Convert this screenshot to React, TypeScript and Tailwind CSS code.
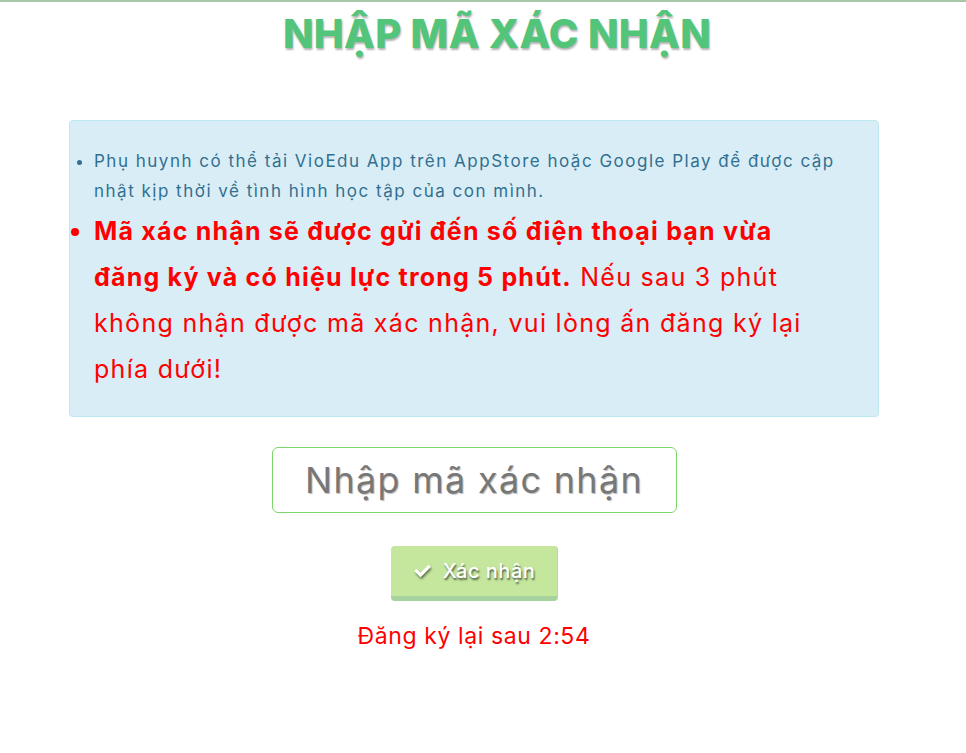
import React from "react";

export default function App() {
  return (
    <div
      className="min-h-[753px] w-full bg-white border-t-2 border-[#a8c6a8]"
      style={{ fontFamily: 'Inter, "Noto Sans", sans-serif' }}
    >
      <div className="ml-[69px] w-[810px] flex flex-col items-center">
        <h1 className="pl-[46px] mt-[6px] text-[40px] leading-[52px] font-extrabold text-[#52c57a] tracking-[0.3px] [text-shadow:1px_2px_2px_rgba(0,0,0,0.3)]">
          NHẬP MÃ XÁC NHẬN
        </h1>

        <div className="mt-[60px] w-full rounded-[4px] border border-[#bce8f1] bg-[#d9edf7] pt-[25px] pb-[24px]">
          <ul className="list-disc pl-[24px] pr-[35px]">
            <li className="text-[17px] leading-[30px] tracking-[1.5px] text-[#31708f]">
              Phụ huynh có thể tải VioEdu App trên AppStore hoặc Google Play để được cập nhật kịp thời về tình hình học tập của con mình.
            </li>
            <li className="mt-[2px] text-[25px] leading-[46px] tracking-[1.3px] text-[#ff0000] marker:text-[#ff0000]">
              <b className="font-bold tracking-[1.2px]">
                Mã xác nhận sẽ được gửi đến số điện thoại bạn vừa đăng ký và có hiệu lực trong 5 phút.
              </b>{" "}
              Nếu sau 3 phút không nhận được mã xác nhận, vui lòng ấn đăng ký lại phía dưới!
            </li>
          </ul>
        </div>

        <input
          type="text"
          placeholder="Nhập mã xác nhận"
          className="mt-[30px] h-[66px] w-[405px] rounded-[6px] border border-[#7fd66b] bg-white text-center text-[36px] tracking-[1.3px] text-[#555] outline-none placeholder:text-[#777] [text-shadow:1px_1px_1px_rgba(0,0,0,0.25)]"
        />

        <button
          type="button"
          className="mt-[33px] flex h-[55px] w-[166px] items-center justify-center gap-[11px] rounded-[4px] border-b-[5px] border-[#a6d39d] bg-[#c4e79d] text-[20px] font-medium tracking-[0.5px] text-white shadow-[1px_0_0_#b5dba4] [text-shadow:1px_2px_2px_rgba(0,0,0,0.6)]"
        >
          <svg width="19" height="16" viewBox="0 0 512 512" className="drop-shadow-[1px_2px_1px_rgba(0,0,0,0.5)]">
            <path
              fill="#ffffff"
              d="M173.9 439.4l-166.4-166.4c-10-10-10-26.2 0-36.2l36.2-36.2c10-10 26.2-10 36.2 0L192 312.7 432.1 72.6c10-10 26.2-10 36.2 0l36.2 36.2c10 10 10 26.2 0 36.2L210.1 439.4c-10 10-26.2 10-36.2 0z"
            />
          </svg>
          <span>Xác nhận</span>
        </button>

        <div className="mt-[20px] text-[23px] leading-[30px] tracking-[0.6px] text-[#ff0000]">
          Đăng ký lại sau 2:54
        </div>
      </div>
    </div>
  );
}
